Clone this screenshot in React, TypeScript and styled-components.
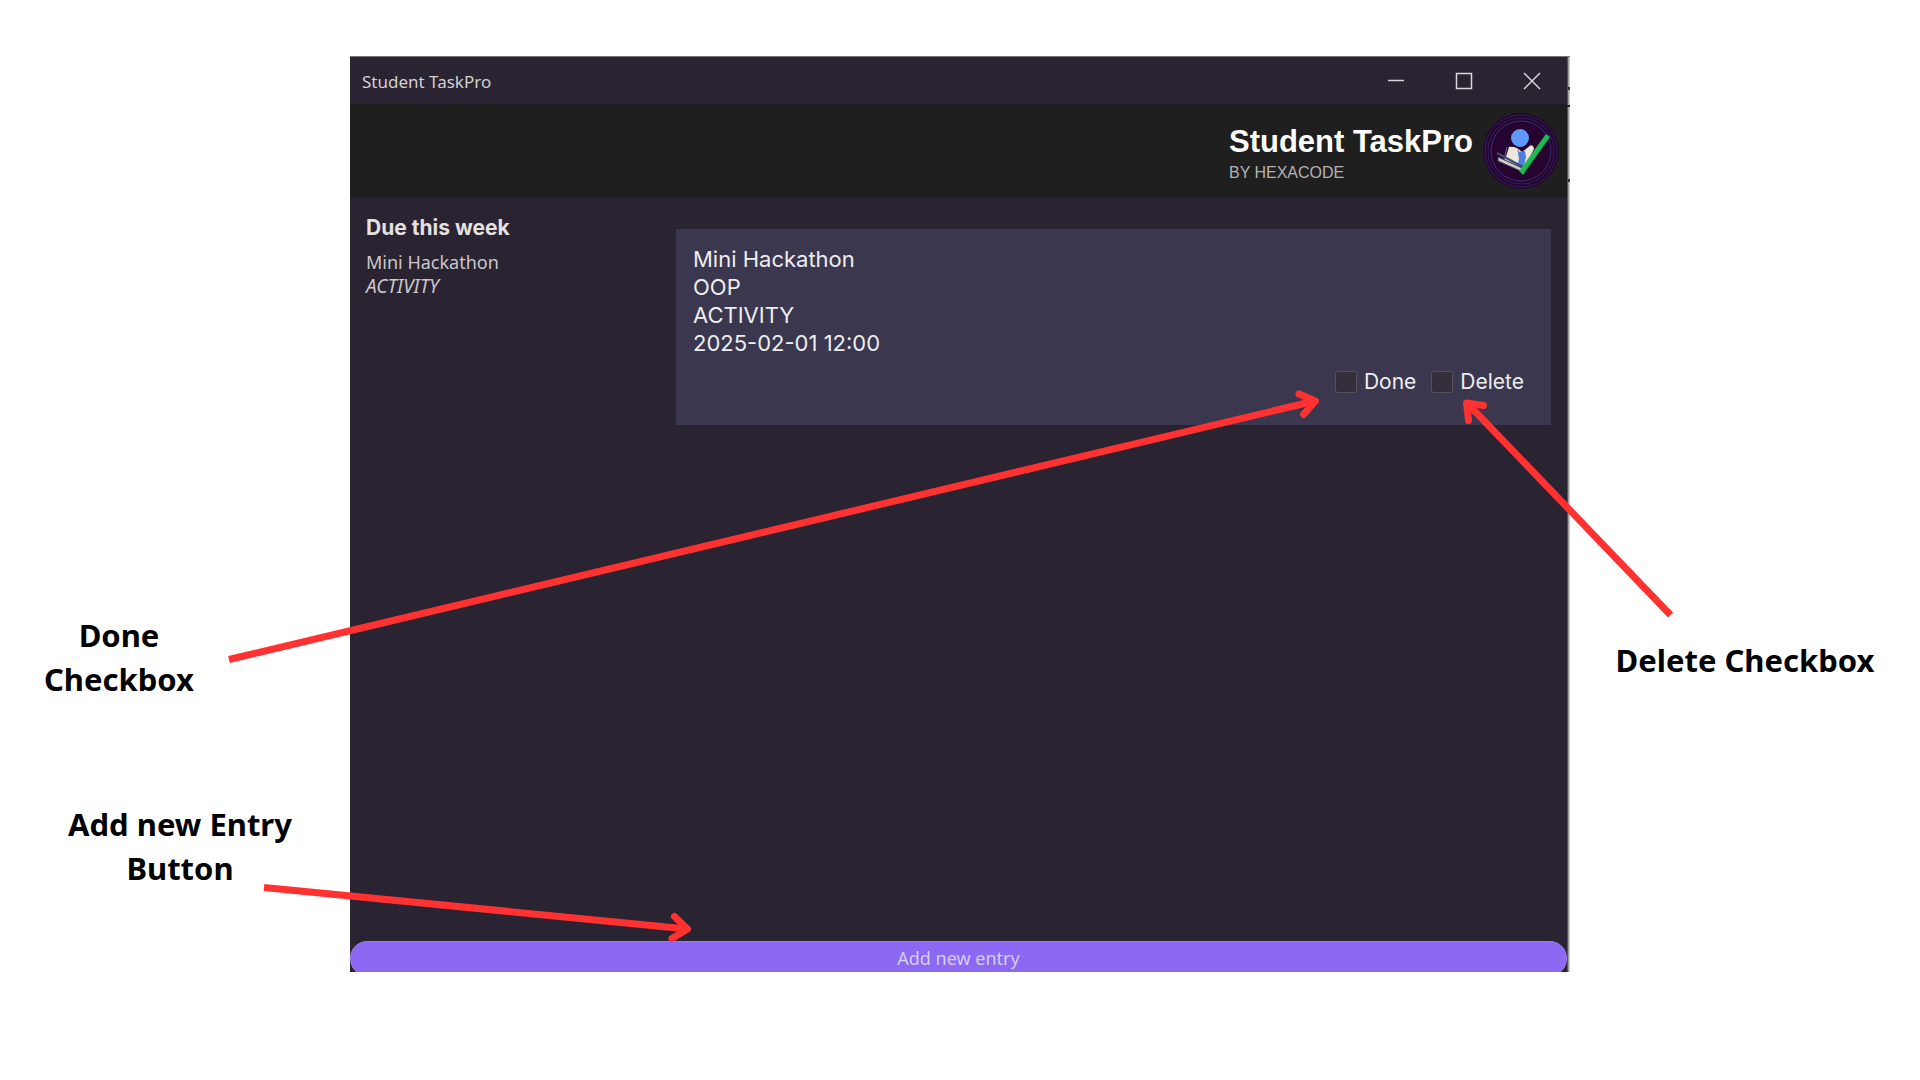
import React from "react";
import styled, { createGlobalStyle } from "styled-components";

const ui = `"Noto Sans", "Open Sans", sans-serif`;
const inter = `Inter, "Liberation Sans", sans-serif`;
const arial = `"Liberation Sans", Arial, sans-serif`;

const GlobalStyle = createGlobalStyle`
  *, *::before, *::after { box-sizing: border-box; }
  body { margin: 0; background: #fff; }
  h1, h2, p, ul { margin: 0; padding: 0; }
`;

const Page = styled.main`
  position: relative;
  display: grid;
  grid-template-columns: 350px minmax(0, 1fr) 350px;
  min-height: 100vh;
  padding: 56px 0 108px;
`;

const Captions = styled.aside<{ $top: number }>`
  display: flex;
  flex-direction: column;
  align-items: center;
  gap: 101px;
  padding-top: ${(p) => p.$top}px;
`;

const Caption = styled.p<{ $width: number; $indent?: number }>`
  width: ${(p) => p.$width}px;
  margin-left: ${(p) => p.$indent ?? 0}px;
  font: 700 31px/44px ${ui};
  color: #000;
  text-align: center;
`;

/* The right padding shows the window's light edge and the dark ticks on it. */
const AppWindow = styled.section`
  display: flex;
  flex-direction: column;
  overflow: hidden;
  padding-right: 3px;
  border-top: 1px solid #77757a;
  background:
    linear-gradient(#333, #333) right 30px / 2px 3px no-repeat,
    linear-gradient(#222, #222) right 48px / 3px 2px no-repeat,
    linear-gradient(#333, #333) right 122px / 2px 3px no-repeat,
    linear-gradient(to right, #55525a 1px, #a3a1a5 1px, #a3a1a5 2px, #c9c8ca 2px) right top / 3px 100% no-repeat,
    #2a2332;
`;

const TitleBar = styled.header`
  display: flex;
  align-items: center;
  justify-content: space-between;
  height: 47px;
  padding: 0 1px 0 12px;
  font: 400 17px/24px ${ui};
  color: #d3d0d3;
`;

const WindowTitle = styled.span`
  padding-top: 2px;
`;

const WindowControls = styled.div`
  display: flex;
`;

const ControlButton = styled.button`
  display: grid;
  place-items: center;
  width: 68px;
  height: 47px;
  padding: 0;
  border: 0;
  background: none;
  color: #d8d6da;
`;

const Banner = styled.div`
  display: flex;
  align-items: center;
  justify-content: flex-end;
  gap: 9px;
  height: 94px;
  padding-right: 7px;
  background: #1f1f1f;
`;

const Brand = styled.div`
  display: flex;
  flex-direction: column;
  padding-top: 8px;
`;

const BrandName = styled.h1`
  font: 700 31px/36px ${arial};
  color: #fff;
`;

const BrandBy = styled.p`
  font: 400 16px/26px ${arial};
  color: #b3b3b3;
`;

const Body = styled.div`
  display: grid;
  grid-template-columns: 310px minmax(0, 1fr);
  flex: 1;
  padding: 17px 16px 0 16px;
`;

const DueTitle = styled.h2`
  margin-bottom: 9px;
  font: 700 21px/26px ${inter};
  color: #e4e1e1;
`;

const DueItem = styled.p`
  font: 400 18px/24px ${ui};
  color: #cbc8ca;
`;

const DueKind = styled(DueItem)`
  font-size: 19px;
  font-style: italic;
`;

const Card = styled.article`
  align-self: start;
  margin-top: 14px;
  padding: 16px 27px 29px 17px;
  background: #3a374e;
  font: 400 22px/28px ${inter};
  color: #eeedf0;
`;

const CardActions = styled.div`
  display: flex;
  justify-content: flex-end;
  gap: 15px;
  margin-top: 11px;
`;

const Check = styled.label`
  display: flex;
  align-items: center;
  gap: 7px;
  font-size: 21px;
`;

const CheckInput = styled.input`
  appearance: none;
  width: 22px;
  height: 22px;
  margin: 0;
  border: 1px solid #56515e;
  border-radius: 3px;
  background: #342d3c;
  &:checked { background: #8b69f2; }
`;

const ButtonBar = styled.div`
  height: 31px;
`;

const AddButton = styled.button`
  display: block;
  width: 100%;
  height: 35px;
  padding: 0;
  border: 1px solid #9a7cf2;
  border-radius: 17px;
  background: #8b69f2;
  font: 400 18px/33px ${ui};
  color: #d6cdee;
`;

const Arrows = styled.svg`
  position: absolute;
  inset: 0;
  width: 100%;
  height: 100%;
  pointer-events: none;
  fill: none;
  stroke: #ff3131;
  stroke-width: 7;
  stroke-linejoin: round;
`;

const Logo = () => (
  <svg width="78" height="78" viewBox="0 0 78 78" aria-hidden="true">
    <circle cx="39" cy="39" r="38" fill="#25052f" />
    <g fill="none" stroke="#30205c">
      <circle cx="39" cy="39" r="36" />
      <circle cx="39" cy="39" r="33" />
      <circle cx="39" cy="39" r="30" stroke="#3a2f74" />
    </g>
    <path d="M27 35q7-1 13 5l9-7q3 1 3 4l-10 19-19-8z" fill="#eee5da" />
    <path d="M25 35l-3 13 19 8M36 38l3 14" fill="none" stroke="#6a6f86" />
    <path d="M36 40l7-1 1 6-3 12-5-5 1-6z" fill="#4b7fe0" />
    <circle cx="38" cy="26" r="9" fill="#6097fb" />
    <path d="M16 45l24 11 1 4-25-11z" fill="#d9cec0" stroke="#3c4768" />
    <path d="M15 41l26 14" stroke="#3d4c78" strokeWidth="2" />
    <path d="M37 59L40 55L64 22L68 25L41 63z" fill="#20b956" />
    <path d="M42 61L68 25" stroke="#0e7c39" strokeWidth="1" />
  </svg>
);

export default function App() {
  return (
    <>
      <GlobalStyle />
      <Page>
        <Captions $top={557}>
          <Caption $width={180} $indent={-112}>Done Checkbox</Caption>
          <Caption $width={250} $indent={10}>Add new Entry Button</Caption>
        </Captions>
        <AppWindow>
          <TitleBar>
            <WindowTitle>Student TaskPro</WindowTitle>
            <WindowControls>
              <ControlButton aria-label="Minimize">
                <svg width="18" height="18" stroke="currentColor" strokeWidth="1.5"><path d="M1 8.500h16" /></svg>
              </ControlButton>
              <ControlButton aria-label="Maximize">
                <svg width="18" height="18" stroke="currentColor" strokeWidth="1.5" fill="none"><path d="M1.500 1.500h15v15h-15z" /></svg>
              </ControlButton>
              <ControlButton aria-label="Close">
                <svg width="18" height="18" stroke="currentColor" strokeWidth="1.5"><path d="M1 1l16 16M17 1L1 17" /></svg>
              </ControlButton>
            </WindowControls>
          </TitleBar>
          <Banner>
            <Brand>
              <BrandName>Student TaskPro</BrandName>
              <BrandBy>BY HEXACODE</BrandBy>
            </Brand>
            <Logo />
          </Banner>
          <Body>
            <div>
              <DueTitle>Due this week</DueTitle>
              <DueItem>Mini Hackathon</DueItem>
              <DueKind>ACTIVITY</DueKind>
            </div>
            <Card>
              <p>Mini Hackathon</p>
              <p>OOP</p>
              <p>ACTIVITY</p>
              <p>2025-02-01 12:00</p>
              <CardActions>
                <Check><CheckInput type="checkbox" />Done</Check>
                <Check><CheckInput type="checkbox" />Delete</Check>
              </CardActions>
            </Card>
          </Body>
          <ButtonBar>
            <AddButton type="button">Add new entry</AddButton>
          </ButtonBar>
        </AppWindow>
        <Captions $top={582}>
          <Caption $width={300}>Delete Checkbox</Caption>
        </Captions>
        <Arrows viewBox="0 0 1920 1080" aria-hidden="true">
          <path d="M229 659.500L1315 401M264 887.500L687 929M1670.500 615L1467 403" />
          <path strokeLinecap="round" d="M1299 394L1315.500 401L1303.500 414.500M674.500 916.500L687.500 929L672 938.500M1483.500 405.500L1466.500 403L1468.500 420.500" />
        </Arrows>
      </Page>
    </>
  );
}
